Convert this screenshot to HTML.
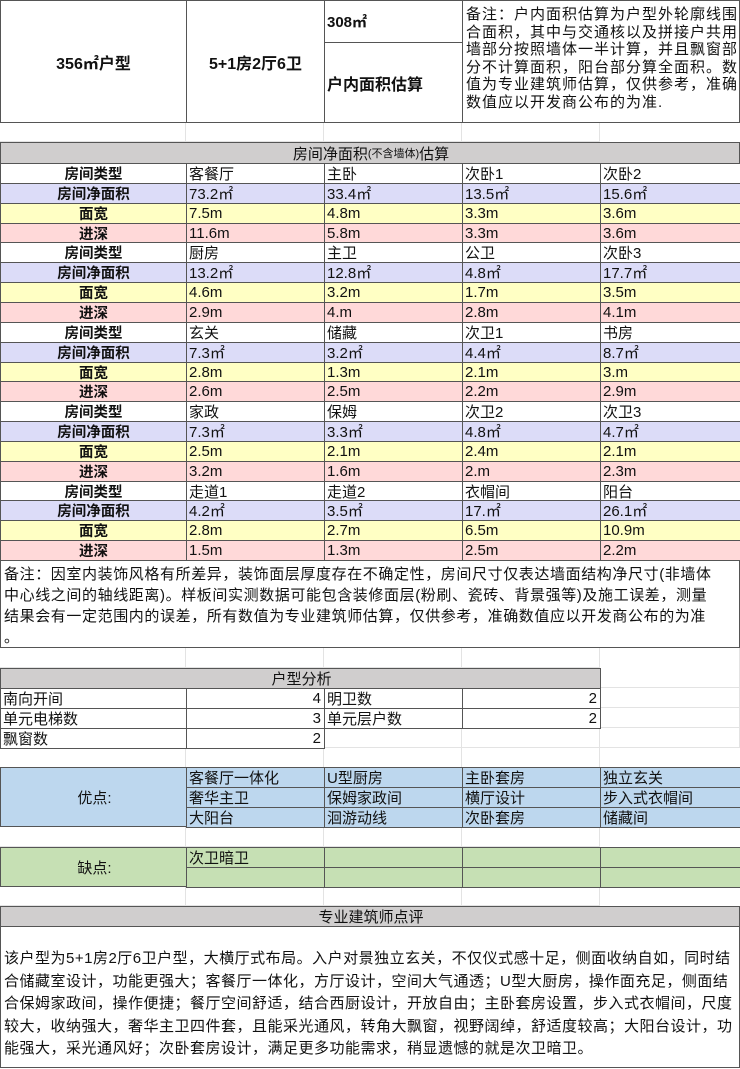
<!DOCTYPE html><html><head><meta charset="utf-8"><style>
*{margin:0;padding:0;box-sizing:border-box}
body{width:740px;height:1069px;position:relative;background:#fff;font-family:"Liberation Sans","Noto Sans CJK SC",sans-serif;color:#111;overflow:hidden}
.c{position:absolute;border:1px solid #555;font-size:14px;white-space:nowrap;overflow:hidden;display:flex;align-items:center;padding-left:2px}
.b{font-weight:bold;justify-content:center;padding:0}
.g{position:absolute;border-right:1px solid #e3e3e3;border-bottom:1px solid #e3e3e3}
.blk{display:block}
</style></head><body>
<div class="g" style="left:0;top:122px;width:186px;height:20px"></div><div class="g" style="left:186px;top:122px;width:138px;height:20px"></div><div class="g" style="left:324px;top:122px;width:138px;height:20px"></div><div class="g" style="left:462px;top:122px;width:138px;height:20px"></div>
<div class="g" style="left:0;top:647px;width:186px;height:21px"></div><div class="g" style="left:186px;top:647px;width:138px;height:21px"></div><div class="g" style="left:324px;top:647px;width:138px;height:21px"></div><div class="g" style="left:462px;top:647px;width:138px;height:21px"></div><div class="g" style="left:600px;top:647px;width:140px;height:41px"></div>
<div class="g" style="left:600px;top:688px;width:140px;height:20px"></div><div class="g" style="left:600px;top:708px;width:140px;height:20px"></div><div class="g" style="left:324px;top:728px;width:138px;height:20px"></div><div class="g" style="left:462px;top:728px;width:138px;height:20px"></div><div class="g" style="left:600px;top:728px;width:140px;height:20px"></div>
<div class="g" style="left:0;top:748px;width:186px;height:20px"></div><div class="g" style="left:186px;top:748px;width:138px;height:20px"></div><div class="g" style="left:324px;top:748px;width:138px;height:20px"></div><div class="g" style="left:462px;top:748px;width:138px;height:20px"></div>
<div class="g" style="left:0;top:826px;width:186px;height:21px"></div><div class="g" style="left:186px;top:826px;width:138px;height:21px"></div><div class="g" style="left:324px;top:826px;width:138px;height:21px"></div><div class="g" style="left:462px;top:826px;width:138px;height:21px"></div>
<div class="g" style="left:0;top:886px;width:186px;height:20px"></div><div class="g" style="left:186px;top:886px;width:138px;height:20px"></div><div class="g" style="left:324px;top:886px;width:138px;height:20px"></div><div class="g" style="left:462px;top:886px;width:138px;height:20px"></div>

<div class="c b" style="left:0;top:0;width:187px;height:123px;font-size:16px">356㎡户型</div>
<div class="c b" style="left:186px;top:0;width:139px;height:123px;font-size:16px">5+1房2厅6卫</div>
<div class="c" style="left:324px;top:0;width:139px;height:43px;font-weight:bold;font-size:15px">308㎡</div>
<div class="c" style="left:324px;top:42px;width:139px;height:81px;font-weight:bold;font-size:16px">户内面积估算</div>
<div class="c blk" style="left:462px;top:0;width:278px;height:123px;font-size:15px;letter-spacing:1px;line-height:17.5px;padding:5px 0 0 3px">备注：户内面积估算为户型外轮廓线围<br>合面积，其中与交通核以及拼接户共用<br>墙部分按照墙体一半计算，并且飘窗部<br>分不计算面积，阳台部分算全面积。数<br>值为专业建筑师估算，仅供参考，准确<br>数值应以开发商公布的为准.</div>

<div class="c" style="left:0;top:142px;width:740px;height:22px;background:#d0cece;justify-content:center;font-size:15px">房间净面积<span style="font-size:11px">(不含墙体)</span>估算</div>
<div id="t"></div>

<div class="c blk" style="left:0;top:560px;width:740px;height:88px;font-size:15px;letter-spacing:0.6px;line-height:21px;padding:3px 3px">备注：因室内装饰风格有所差异，装饰面层厚度存在不确定性，房间尺寸仅表达墙面结构净尺寸(非墙体<br>中心线之间的轴线距离)。样板间实测数据可能包含装修面层(粉刷、瓷砖、背景强等)及施工误差，测量<br>结果会有一定范围内的误差，所有数值为专业建筑师估算，仅供参考，准确数值应以开发商公布的为准<br>。</div>

<div class="c" style="left:0;top:668px;width:601px;height:21px;background:#d0cece;justify-content:center;font-size:15px">户型分析</div>
<div class="c" style="left:0;top:688px;width:187px;height:21px;font-size:15px">南向开间</div><div class="c" style="left:186px;top:688px;width:139px;height:21px;justify-content:flex-end;padding-right:3px;font-size:15px">4</div><div class="c" style="left:324px;top:688px;width:139px;height:21px;font-size:15px">明卫数</div><div class="c" style="left:462px;top:688px;width:139px;height:21px;justify-content:flex-end;padding-right:3px;font-size:15px">2</div>
<div class="c" style="left:0;top:708px;width:187px;height:21px;font-size:15px">单元电梯数</div><div class="c" style="left:186px;top:708px;width:139px;height:21px;justify-content:flex-end;padding-right:3px;font-size:15px">3</div><div class="c" style="left:324px;top:708px;width:139px;height:21px;font-size:15px">单元层户数</div><div class="c" style="left:462px;top:708px;width:139px;height:21px;justify-content:flex-end;padding-right:3px;font-size:15px">2</div>
<div class="c" style="left:0;top:728px;width:187px;height:21px;font-size:15px">飘窗数</div><div class="c" style="left:186px;top:728px;width:139px;height:21px;justify-content:flex-end;padding-right:3px;font-size:15px">2</div>

<div class="c" style="left:0;top:767px;width:187px;height:60px;background:#bdd7ee;justify-content:center;font-size:15px">优点:</div>
<div class="c" style="left:0;top:847px;width:187px;height:40px;background:#c6e0b4;justify-content:center;font-size:15px">缺点:</div>
<div id="pc"></div>

<div class="c" style="left:0;top:906px;width:740px;height:21px;background:#d0cece;justify-content:center;font-size:15px">专业建筑师点评</div>
<div class="c blk" style="left:0;top:926px;width:740px;height:142px;font-size:15px;letter-spacing:0.5px;line-height:22.5px;padding:21px 3px 0">该户型为5+1房2厅6卫户型，大横厅式布局。入户对景独立玄关，不仅仪式感十足，侧面收纳自如，同时结<br>合储藏室设计，功能更强大；客餐厅一体化，方厅设计，空间大气通透；U型大厨房，操作面充足，侧面结<br>合保姆家政间，操作便捷；餐厅空间舒适，结合西厨设计，开放自由；主卧套房设置，步入式衣帽间，尺度<br>较大，收纳强大，奢华主卫四件套，且能采光通风，转角大飘窗，视野阔绰，舒适度较高；大阳台设计，功<br>能强大，采光通风好；次卧套房设计，满足更多功能需求，稍显遗憾的就是次卫暗卫。</div>

<script>
var X=[0,186,324,462,600,740];
var G=[["客餐厅","主卧","次卧1","次卧2","73.2㎡","33.4㎡","13.5㎡","15.6㎡","7.5m","4.8m","3.3m","3.6m","11.6m","5.8m","3.3m","3.6m"],
["厨房","主卫","公卫","次卧3","13.2㎡","12.8㎡","4.8㎡","17.7㎡","4.6m","3.2m","1.7m","3.5m","2.9m","4.m","2.8m","4.1m"],
["玄关","储藏","次卫1","书房","7.3㎡","3.2㎡","4.4㎡","8.7㎡","2.8m","1.3m","2.1m","3.m","2.6m","2.5m","2.2m","2.9m"],
["家政","保姆","次卫2","次卫3","7.3㎡","3.3㎡","4.8㎡","4.7㎡","2.5m","2.1m","2.4m","2.1m","3.2m","1.6m","2.m","2.3m"],
["走道1","走道2","衣帽间","阳台","4.2㎡","3.5㎡","17.㎡","26.1㎡","2.8m","2.7m","6.5m","10.9m","1.5m","1.3m","2.5m","2.2m"]];
var L=["房间类型","房间净面积","面宽","进深"],C=["#fff","#dcdcf8","#ffffc4","#ffd9d9"];
var h="",rh=397/20;
for(var g=0;g<5;g++)for(var r=0;r<4;r++){var y=Math.round(163+(g*4+r)*rh),y2=Math.round(163+(g*4+r+1)*rh);
for(var c=0;c<5;c++){var t=c==0?L[r]:G[g][r*4+c-1];
h+='<div class="c'+(c==0?' b':'')+'" style="left:'+X[c]+'px;top:'+y+'px;width:'+(X[c+1]-X[c]+1)+'px;height:'+(y2-y+1)+'px;background:'+C[r]+';font-size:'+(c==0?14.5:15)+'px">'+t+'</div>';}}
document.getElementById("t").innerHTML=h;
var P=[["客餐厅一体化","U型厨房","主卧套房","独立玄关"],["奢华主卫","保姆家政间","横厅设计","步入式衣帽间"],["大阳台","洄游动线","次卧套房","储藏间"]];
var Y=[767,787,807,827];h="";
for(var r=0;r<3;r++)for(var c=1;c<5;c++)h+='<div class="c" style="left:'+X[c]+'px;top:'+Y[r]+'px;width:'+(X[c+1]-X[c]+1)+'px;height:'+(Y[r+1]-Y[r]+1)+'px;background:#bdd7ee;font-size:15px">'+P[r][c-1]+'</div>';
var Y2=[847,867,887];
for(var r=0;r<2;r++)for(var c=1;c<5;c++)h+='<div class="c" style="left:'+X[c]+'px;top:'+Y2[r]+'px;width:'+(X[c+1]-X[c]+1)+'px;height:'+(Y2[r+1]-Y2[r]+1)+'px;background:#c6e0b4;font-size:15px">'+(r==0&&c==1?"次卫暗卫":"")+'</div>';
document.getElementById("pc").innerHTML=h;
</script>
</body></html>
